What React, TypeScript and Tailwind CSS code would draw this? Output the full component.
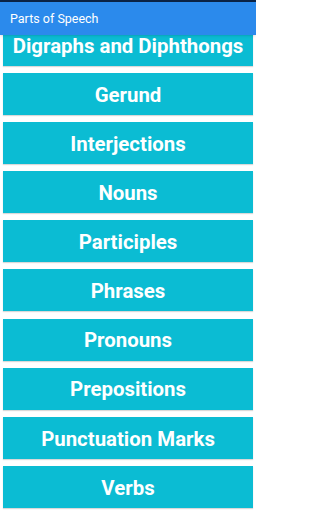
import React from "react";

const items = [
  "Digraphs and Diphthongs",
  "Gerund",
  "Interjections",
  "Nouns",
  "Participles",
  "Phrases",
  "Pronouns",
  "Prepositions",
  "Punctuation Marks",
  "Verbs",
];

export default function App() {
  return (
    <div
      className="w-[256px] h-[512px] overflow-hidden bg-white flex flex-col"
      style={{ fontFamily: "Roboto, 'Liberation Sans', sans-serif" }}
    >
      <div className="relative z-10 shrink-0">
        <div className="h-[2px] bg-[#0b2447]" />
        <div className="h-[33px] bg-[#2b8aec] flex items-center pl-[10px] pt-[1px] shadow-sm">
          <span className="text-white text-[12.5px] leading-none">Parts of Speech</span>
        </div>
      </div>
      <div className="mt-[-11px] flex flex-col gap-[7.1px] px-[3px]">
        {items.map((t) => (
          <div
            key={t}
            className="h-[42px] shrink-0 bg-[#0bbcd3] flex items-center justify-center pt-[2px] shadow-[0_1px_1px_rgba(0,0,0,0.15)]"
          >
            <span className="text-white font-bold text-[20.4px] leading-none">{t}</span>
          </div>
        ))}
      </div>
    </div>
  );
}
